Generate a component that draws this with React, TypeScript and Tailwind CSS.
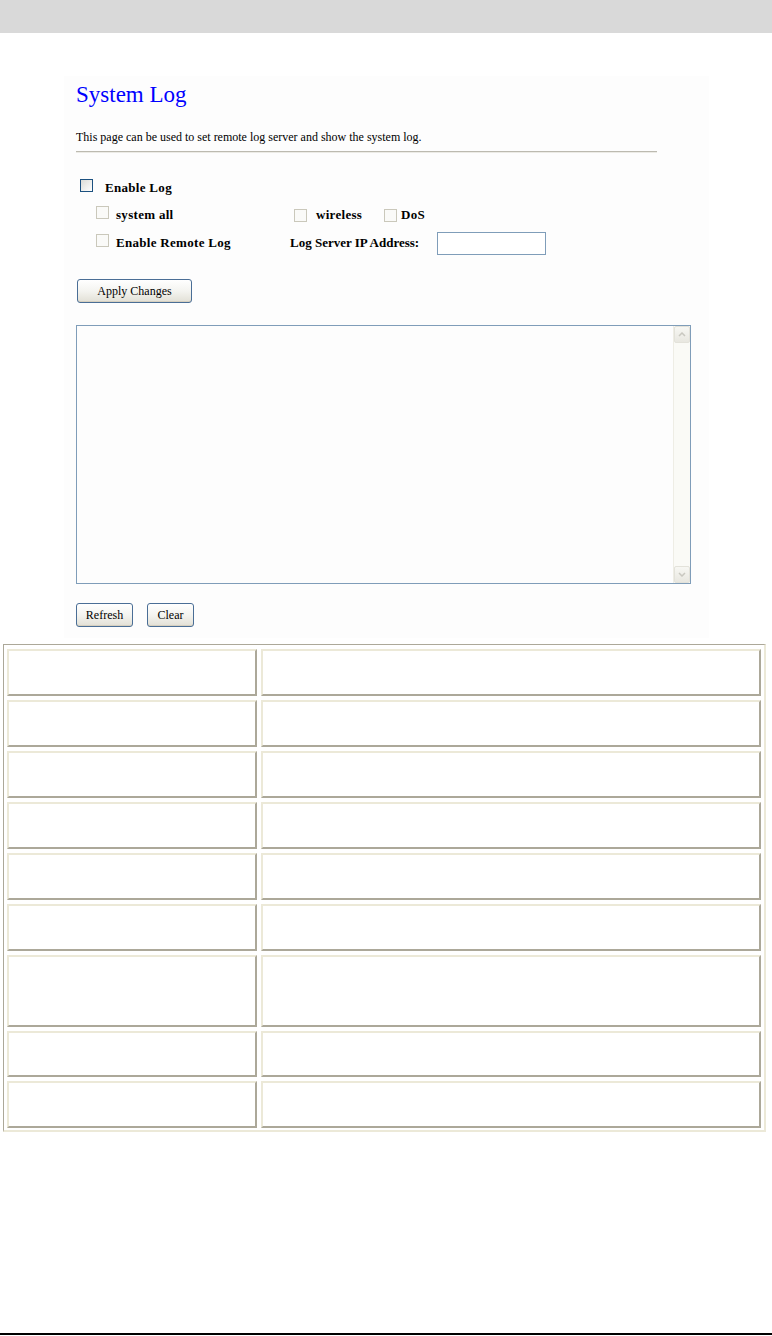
import React from "react";

const serif = { fontFamily: '"Liberation Serif", "Times New Roman", serif' };

function Check({ enabled = false }: { enabled?: boolean }) {
  return enabled ? (
    <span className="inline-block w-[13px] h-[13px] border border-[#1c5180] bg-gradient-to-br from-[#dcdcd7] to-white shrink-0" />
  ) : (
    <span className="inline-block w-[13px] h-[13px] border border-[#cac8bb] bg-[#fafaf8] shrink-0" />
  );
}

function XPButton({ label, w }: { label: string; w: string }) {
  return (
    <div
      className={`${w} h-[24px] rounded-[3px] border border-[#4a6e96] bg-gradient-to-b from-white via-[#f4f4f0] to-[#e2e0d6] flex items-center justify-center text-[12px] text-black shadow-[inset_0_-1px_0_#d6d0c0]`}
    >
      {label}
    </div>
  );
}

export default function App() {
  const rows = [47, 47, 47, 47, 47, 47, 72, 46, 47];
  return (
    <div className="w-[772px] h-[1336px] bg-white flex flex-col" style={serif}>
      <div className="h-[33px] bg-[#d9d9d9] shrink-0" />

      {/* screenshot panel */}
      <div className="ml-[64px] mt-[43px] w-[645px] h-[562px] bg-[#fdfdfd] pl-[12px] flex flex-col shrink-0">
        <div className="mt-[5px] h-[28px] leading-[28px] text-[23px] text-[#0000ff]">System Log</div>
        <div className="mt-[20px] h-[16px] leading-[16px] text-[12px] text-black">
          This page can be used to set remote log server and show the system log.
        </div>
        <div className="mt-[6px] w-[581px] h-[2px] border-t border-[#bcbab0] border-b border-b-[#ecebe6]" />

        <div className="mt-[27px] h-[16px] flex items-center text-[13px] font-bold tracking-[0.3px]">
          <span className="ml-[4px]"><Check enabled /></span>
          <span className="ml-[12px]">Enable Log</span>
        </div>

        <div className="mt-[11px] h-[16px] flex items-center text-[13px] font-bold tracking-[0.3px]">
          <span className="ml-[20px]"><Check /></span>
          <span className="ml-[7px] w-[178px]">system all</span>
          <Check />
          <span className="ml-[9px] w-[68px]">wireless</span>
          <Check />
          <span className="ml-[4px]">DoS</span>
        </div>

        <div className="mt-[8px] h-[24px] flex items-center text-[13px] font-bold tracking-[0.3px]">
          <span className="ml-[20px]"><Check /></span>
          <span className="ml-[7px] w-[174px]">Enable Remote Log</span>
          <span className="w-[147px] tracking-normal">Log Server IP Address:</span>
          <span className="w-[109px] h-[23px] border border-[#7f9db9] bg-white" />
        </div>

        <div className="mt-[24px] ml-[1px] flex">
          <XPButton label="Apply Changes" w="w-[115px]" />
        </div>

        <div className="mt-[22px] w-[615px] h-[259px] border border-[#7f9db9] bg-[#fdfdfd] flex justify-end">
          <div className="w-[17px] h-full bg-[#fafaf6] border-l border-[#eeede5] flex flex-col justify-between">
            <div className="h-[17px] rounded-[2px] border border-[#e3e2da] bg-gradient-to-b from-[#f7f7f3] to-[#e8e7e0] flex items-center justify-center">
              <svg width="8" height="5" viewBox="0 0 8 5">
                <path d="M1 4 L4 1 L7 4" stroke="#c9c8c0" strokeWidth="1.5" fill="none" />
              </svg>
            </div>
            <div className="h-[17px] rounded-[2px] border border-[#e3e2da] bg-gradient-to-b from-[#f7f7f3] to-[#e8e7e0] flex items-center justify-center">
              <svg width="8" height="5" viewBox="0 0 8 5">
                <path d="M1 1 L4 4 L7 1" stroke="#c9c8c0" strokeWidth="1.5" fill="none" />
              </svg>
            </div>
          </div>
        </div>

        <div className="mt-[19px] flex gap-[14px]">
          <XPButton label="Refresh" w="w-[57px]" />
          <XPButton label="Clear" w="w-[47px]" />
        </div>
      </div>

      {/* table */}
      <div className="ml-[3px] mt-[6px] w-[763px] border-t border-l border-t-[#aca899] border-l-[#aca899] border-r-2 border-b-2 border-r-[#ece9d8] border-b-[#ece9d8] pt-[4px] pl-[3px] pr-[2px] pb-[2px] flex flex-col gap-[4px] shrink-0">
        {rows.map((h, i) => (
          <div key={i} className="flex gap-[4px]">
            <div
              className="w-[250px] border-2 border-t-[#ece9d8] border-l-[#ece9d8] border-r-[#aca899] border-b-[#aca899] bg-white"
              style={{ height: h }}
            />
            <div
              className="w-[500px] border-2 border-t-[#ece9d8] border-l-[#ece9d8] border-r-[#aca899] border-b-[#aca899] bg-white"
              style={{ height: h }}
            />
          </div>
        ))}
      </div>

      <div className="flex-1" />
      <div className="h-[2px] bg-black shrink-0" />
      <div className="h-[1px] shrink-0" />
    </div>
  );
}
